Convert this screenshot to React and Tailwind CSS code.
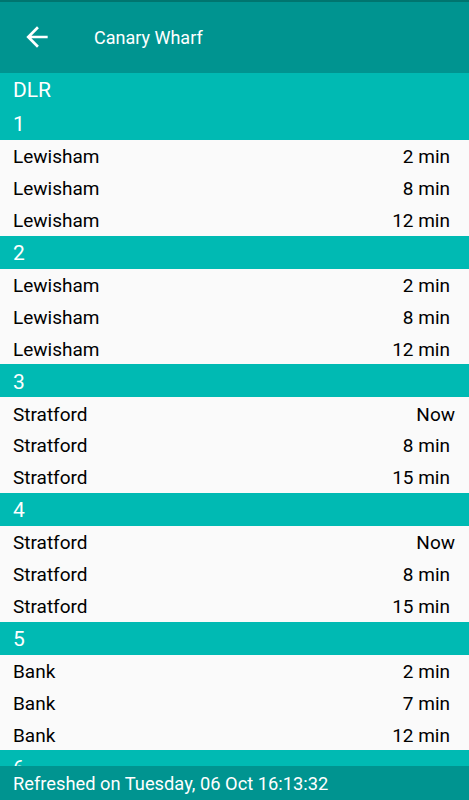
import React from "react";

const groups = [
  { n: "1", rows: [["Lewisham", "2 min"], ["Lewisham", "8 min"], ["Lewisham", "12 min"]] },
  { n: "2", rows: [["Lewisham", "2 min"], ["Lewisham", "8 min"], ["Lewisham", "12 min"]] },
  { n: "3", rows: [["Stratford", "Now"], ["Stratford", "8 min"], ["Stratford", "15 min"]] },
  { n: "4", rows: [["Stratford", "Now"], ["Stratford", "8 min"], ["Stratford", "15 min"]] },
  { n: "5", rows: [["Bank", "2 min"], ["Bank", "7 min"], ["Bank", "12 min"]] },
  { n: "6", rows: [["Bank", "2 min"], ["Bank", "7 min"], ["Bank", "12 min"]] },
];

export default function App() {
  return (
    <div
      className="h-[800px] w-[469px] flex flex-col overflow-hidden bg-[#fafafa]"
      style={{ fontFamily: "Roboto, 'Noto Sans', sans-serif" }}
    >
      <div className="h-[73px] shrink-0 bg-[#009490] border-t-2 border-[#00756f] flex items-center">
        <svg width="32" height="32" viewBox="0 0 24 24" className="ml-[21px] -mt-[1px]" fill="#ffffff">
          <path d="M20 11H7.83l5.59-5.59L12 4l-8 8 8 8 1.41-1.41L7.83 13H20v-2z" />
        </svg>
        <span className="ml-[41px] text-[18px] text-white">Canary Wharf</span>
      </div>
      <div className="flex-1 overflow-hidden">
        <div className="h-[34px] bg-[#00bab3] text-white text-[21px] pl-[13px] pt-[2px] flex items-center">DLR</div>
        {groups.map((g) => (
          <div key={g.n}>
            <div className="h-[33px] bg-[#00bab3] text-white text-[21px] pl-[13px] pt-[3px] flex items-center">{g.n}</div>
            {g.rows.map(([d, t], i) => (
              <div key={i} className="h-[31.9px] flex items-center justify-between pl-[13px] pt-[3px] text-[19px] text-black">
                <span>{d}</span>
                <span className={t === "Now" ? "pr-[14px]" : "pr-[19px]"}>{t}</span>
              </div>
            ))}
          </div>
        ))}
      </div>
      <div className="h-[34px] shrink-0 bg-[#009490] text-white text-[18.3px] pl-[13px] pt-[2px] flex items-center">
        Refreshed on Tuesday, 06 Oct 16:13:32
      </div>
    </div>
  );
}
